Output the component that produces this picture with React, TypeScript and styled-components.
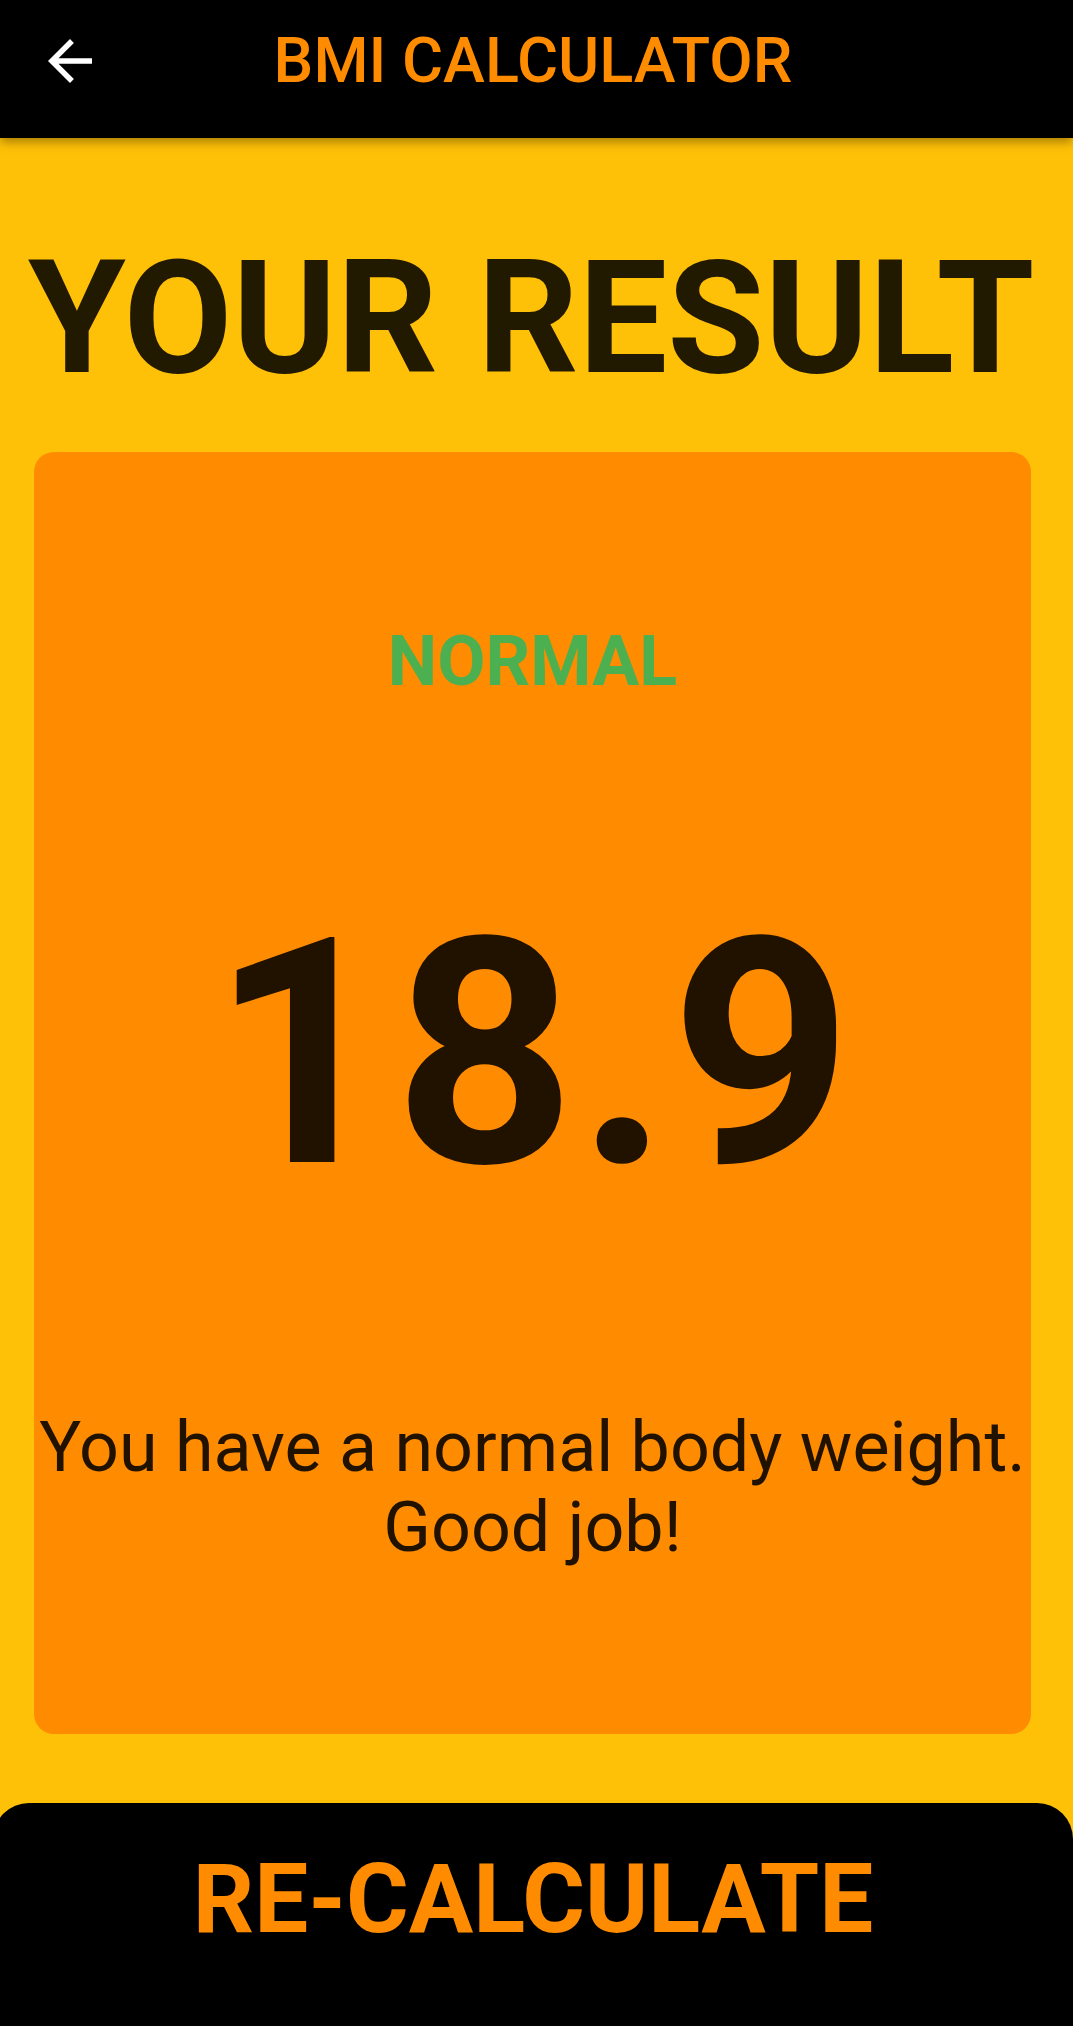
import React from "react";
import styled, { createGlobalStyle } from "styled-components";

const GlobalStyle = createGlobalStyle`
  html, body {
    margin: 0;
    padding: 0;
    background: #ffc107;
  }
  body {
    font-family: Roboto, "Liberation Sans", Arial, sans-serif;
    overflow-x: hidden;
  }
  * { box-sizing: border-box; }
`;

const Page = styled.div`
  display: flex;
  flex-direction: column;
  min-height: 100vh;
  background: #ffc107;
  overflow: hidden;
`;

const Header = styled.header`
  position: relative;
  z-index: 1;
  flex: 0 0 138px;
  display: grid;
  grid-template-columns: 1fr auto 1fr;
  align-items: start;
  padding: 0 44px 0 37px;
  background: #000;
  box-shadow: 0 4px 10px rgba(0, 0, 0, 0.35);
`;

const BackButton = styled.button`
  justify-self: start;
  width: 66px;
  height: 66px;
  margin-top: 28px;
  padding: 0;
  border: none;
  background: transparent;
  color: #fff;
  cursor: pointer;
  svg { display: block; width: 66px; height: 66px; }
`;

const HeaderTitle = styled.h1`
  margin: 23px 0 0;
  font-size: 63px;
  line-height: 75px;
  font-weight: 500;
  color: #ff8c00;
  white-space: nowrap;
`;

const ResultTitle = styled.h2`
  margin: 87px 0 41px;
  padding-left: 28px;
  font-size: 158px;
  line-height: 186px;
  font-weight: 700;
  color: rgba(0, 0, 0, 0.87);
  white-space: nowrap;
`;

const Card = styled.section`
  flex: 1;
  margin: 0 42px 0 34px;
  border-radius: 20px;
  background: #ff8c00;
  display: flex;
  flex-direction: column;
  align-items: center;
  justify-content: space-evenly;
  text-align: center;
`;

const Status = styled.div<{ $color: string }>`
  font-size: 70px;
  line-height: 82px;
  font-weight: 700;
  color: ${(p) => p.$color};
`;

const Value = styled.div`
  font-size: 316px;
  line-height: 370px;
  font-weight: 700;
  letter-spacing: 2px;
  color: rgba(0, 0, 0, 0.87);
`;

const Message = styled.p`
  margin: 0;
  font-size: 70px;
  line-height: 80px;
  font-weight: 400;
  color: rgba(0, 0, 0, 0.87);
  white-space: nowrap;
`;

const RecalcButton = styled.button`
  flex: 0 0 223px;
  margin: 69px 0 0 -7px;
  width: calc(100% + 7px);
  padding: 40px 0 0;
  border: none;
  border-radius: 36px 36px 0 0;
  background: #000;
  display: flex;
  justify-content: center;
  align-items: flex-start;
  font-family: Roboto, "Liberation Sans", Arial, sans-serif;
  font-size: 96px;
  line-height: 112px;
  font-weight: 700;
  color: #ff8c00;
  cursor: pointer;
`;

function ArrowBack() {
  return (
    <svg viewBox="0 0 24 24" fill="currentColor" aria-hidden="true">
      <path d="M20 11H7.83l5.59-5.59L12 4l-8 8 8 8 1.41-1.41L7.83 13H20v-2z" />
    </svg>
  );
}

export default function App() {
  const result = {
    label: "NORMAL",
    color: "#4caf50",
    bmi: "18.9",
    lines: ["You have a normal body weight.", "Good job!"],
  };
  return (
    <>
      <GlobalStyle />
      <Page>
        <Header>
          <BackButton aria-label="Back">
            <ArrowBack />
          </BackButton>
          <HeaderTitle>BMI CALCULATOR</HeaderTitle>
        </Header>
        <ResultTitle>YOUR RESULT</ResultTitle>
        <Card>
          <Status $color={result.color}>{result.label}</Status>
          <Value>{result.bmi}</Value>
          <Message>
            {result.lines[0]}
            <br />
            {result.lines[1]}
          </Message>
        </Card>
        <RecalcButton>RE-CALCULATE</RecalcButton>
      </Page>
    </>
  );
}
